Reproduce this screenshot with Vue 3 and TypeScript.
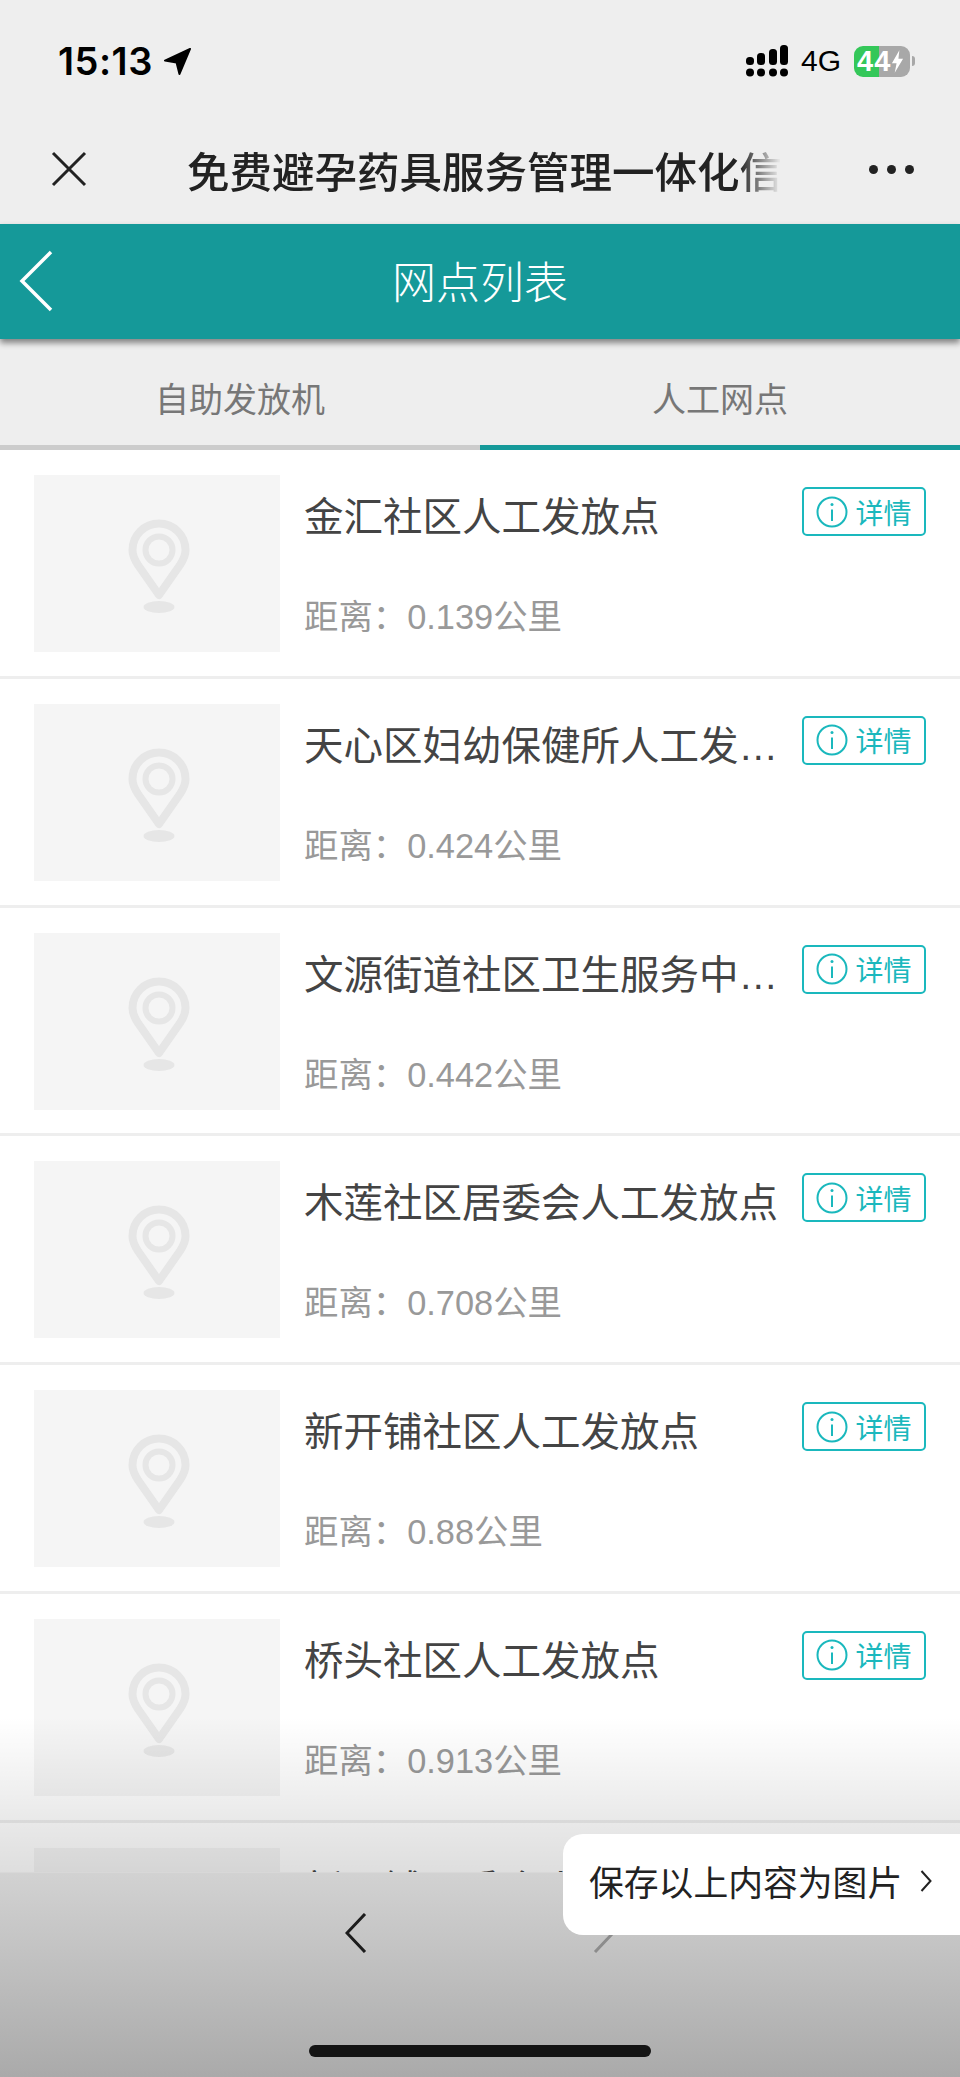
<script setup lang="ts">
interface Site {
  name: string
  distance: string
}

const sites: Site[] = [
  { name: '金汇社区人工发放点', distance: '0.139' },
  { name: '天心区妇幼保健所人工发放点', distance: '0.424' },
  { name: '文源街道社区卫生服务中心人工发放点', distance: '0.442' },
  { name: '木莲社区居委会人工发放点', distance: '0.708' },
  { name: '新开铺社区人工发放点', distance: '0.88' },
  { name: '桥头社区人工发放点', distance: '0.913' },
  { name: '新开铺居委会人工发放点', distance: '1.02' },
]
</script>

<template>
  <div class="page">
    <div class="status-bar">
      <div class="time">
        <span>15:13</span>
        <svg class="loc" viewBox="0 0 30 30" width="29" height="29">
          <path d="M28 2 L2 14 L14 16 L17 28 Z" fill="#000" stroke="#000" stroke-width="2" stroke-linejoin="round" />
        </svg>
      </div>
      <div class="status-right">
        <svg class="signal" viewBox="0 0 42 32" width="42" height="32">
          <g fill="#000">
            <rect x="0" y="12" width="8" height="8" rx="3.5" />
            <rect x="11" y="8" width="8" height="12" rx="3.5" />
            <rect x="23" y="4" width="8" height="16" rx="3.5" />
            <rect x="34" y="0" width="8" height="20" rx="3.5" />
            <circle cx="4" cy="27.5" r="4" />
            <circle cx="15" cy="27.5" r="4" />
            <circle cx="27" cy="27.5" r="4" />
            <circle cx="38" cy="27.5" r="4" />
          </g>
        </svg>
        <span class="net">4G</span>
        <div class="battery">
          <span>44</span>
          <svg viewBox="0 0 14 24" width="13" height="23">
            <path d="M9 0 L1 14 H6 L4 24 L13 9 H8 Z" fill="#fff" />
          </svg>
        </div>
        <span class="battery-cap"></span>
      </div>
    </div>

    <div class="wx-nav">
      <svg class="wx-close" viewBox="0 0 36 36" width="36" height="36">
        <path d="M2 2 L34 34 M34 2 L2 34" stroke="#222" stroke-width="3" fill="none" />
      </svg>
      <div class="wx-title">免费避孕药具服务管理一体化信息系统</div>
      <div class="wx-more"><i></i><i></i><i></i></div>
    </div>

    <header class="head">
      <svg class="head-back" viewBox="0 0 34 62" width="34" height="62">
        <path d="M32 2 L3 31 L32 60" stroke="#fff" stroke-width="3.5" fill="none" />
      </svg>
      <h1>网点列表</h1>
    </header>

    <div class="tabs">
      <div class="tab">自助发放机</div>
      <div class="tab active">人工网点</div>
    </div>

    <div class="list">
      <div v-for="site in sites" :key="site.name" class="row">
        <div class="thumb">
          <svg viewBox="0 0 246 177" width="246" height="177">
            <g fill="none" stroke="#e6e6e6">
              <path d="M125 120 L104 90 C100 84 98.500 80 98.500 75 A26.500 26.500 0 0 1 151.500 75 C151.500 80 150 84 146 90 Z" stroke-width="8" stroke-linejoin="round" />
              <circle cx="125" cy="75" r="13.500" stroke-width="6" />
            </g>
            <ellipse cx="125" cy="132" rx="15.500" ry="6" fill="#e6e6e6" />
          </svg>
        </div>
        <div class="info">
          <div class="name">{{ site.name }}</div>
          <div class="dist">距离：{{ site.distance }}公里</div>
        </div>
        <div class="detail">
          <svg viewBox="0 0 32 32" width="32" height="32">
            <circle cx="16" cy="16" r="14.500" fill="none" stroke="#1ab8bd" stroke-width="2" />
            <path d="M16 13.500 V25" stroke="#1ab8bd" stroke-width="2" />
            <circle cx="16" cy="8.500" r="1.500" fill="#1ab8bd" />
          </svg>
          <span>详情</span>
        </div>
      </div>
      <div class="fade"></div>
    </div>

    <div class="toolbar">
      <svg class="tool-back" viewBox="0 0 22 40" width="22" height="40">
        <path d="M20 1 L2 20 L20 39" stroke="#1c1c1c" stroke-width="3" fill="none" />
      </svg>
      <svg class="tool-next" viewBox="0 0 22 40" width="22" height="40">
        <path d="M2 1 L20 20 L2 39" stroke="#8c8c8c" stroke-width="3" fill="none" />
      </svg>
      <div class="home-bar"></div>
      <div class="save-tip">
        <span>保存以上内容为图片</span>
        <svg viewBox="0 0 12 22" width="12" height="22">
          <path d="M1.500 1 L10.500 11 L1.500 21" stroke="#222" stroke-width="2" fill="none" />
        </svg>
      </div>
    </div>
  </div>
</template>

<style>
html,
body {
  margin: 0;
  background: #fff;
}
</style>

<style scoped>
.page {
  position: relative;
  display: flex;
  flex-direction: column;
  width: 960px;
  height: 2077px;
  overflow: hidden;
  font-family: "Liberation Sans", "Noto Sans CJK SC", sans-serif;
}

.status-bar {
  display: flex;
  align-items: center;
  justify-content: space-between;
  height: 122px;
  padding: 0 45px 0 58px;
  box-sizing: border-box;
  background: #eee;
}

.time {
  display: flex;
  align-items: center;
  gap: 10px;
  font-family: Inter, "Liberation Sans", sans-serif;
  font-size: 38px;
  font-weight: 600;
  letter-spacing: 0.5px;
  color: #000;
}

.status-right {
  display: flex;
  align-items: center;
}

.net {
  margin-left: 13px;
  font-size: 30px;
  color: #000;
}

.battery {
  display: flex;
  align-items: center;
  width: 56px;
  height: 31px;
  margin-left: 13px;
  padding-left: 3px;
  box-sizing: border-box;
  border-radius: 9px;
  background: linear-gradient(90deg, #34c759 25px, #a8a8a8 25px);
  color: #fff;
  font-size: 29px;
  font-weight: 700;
  letter-spacing: 1px;
}

.battery-cap {
  width: 3px;
  height: 10px;
  margin-left: 2px;
  border-radius: 0 3px 3px 0;
  background: #a8a8a8;
}

.wx-nav {
  display: flex;
  align-items: center;
  height: 102px;
  padding: 0 46px 8px 51px;
  box-sizing: border-box;
  background: #eee;
}

.wx-title {
  width: 594px;
  margin-left: 100px;
  overflow: hidden;
  white-space: nowrap;
  font-size: 42.500px;
  font-weight: 500;
  color: #222;
  -webkit-mask-image: linear-gradient(90deg, #000 93%, transparent 100%);
  mask-image: linear-gradient(90deg, #000 93%, transparent 100%);
}

.wx-more {
  display: flex;
  gap: 9px;
  margin-left: auto;
}

.wx-more i {
  width: 9px;
  height: 9px;
  border-radius: 50%;
  background: #222;
}

.head {
  position: relative;
  z-index: 2;
  display: flex;
  align-items: center;
  justify-content: center;
  height: 115px;
  padding-bottom: 3px;
  box-sizing: border-box;
  background: #159999;
  box-shadow: 0 4px 6px rgba(0, 0, 0, 0.45);
}

.head-back {
  position: absolute;
  left: 19px;
  top: 26px;
}

.head h1 {
  margin: 0;
  font-size: 44px;
  font-weight: 300;
  color: #fff;
}

.tabs {
  display: flex;
  height: 111px;
  background: #eee;
}

.tab {
  flex: 1;
  display: flex;
  align-items: center;
  justify-content: center;
  padding-top: 10px;
  box-sizing: border-box;
  border-bottom: 5px solid #ccc;
  font-size: 34px;
  color: #777;
}

.tab.active {
  border-bottom-color: #159999;
}

.list {
  position: relative;
  flex: 1;
  overflow: hidden;
  background: #fff;
}

.row {
  display: flex;
  height: 228.800px;
  padding: 25px 34px 0;
  box-sizing: border-box;
  border-bottom: 3px solid #eee;
}

.thumb {
  flex: none;
  width: 246px;
  height: 177px;
  background: #f5f5f5;
}

.thumb svg {
  display: block;
}

.info {
  flex: none;
  width: 476px;
  margin-left: 24px;
}

.name {
  margin-top: 15px;
  overflow: hidden;
  white-space: nowrap;
  text-overflow: ellipsis;
  font-size: 39.500px;
  line-height: 54px;
  color: #444;
}

.dist {
  margin-top: 50px;
  font-size: 34.400px;
  line-height: 46px;
  color: #999;
}

.detail {
  flex: none;
  display: flex;
  align-items: center;
  justify-content: center;
  gap: 7px;
  width: 124px;
  height: 49px;
  margin: 12px 0 0 22px;
  box-sizing: border-box;
  border: 2px solid #1ab8bd;
  border-radius: 5px;
  font-size: 28px;
  color: #1ab8bd;
}

.fade {
  position: absolute;
  left: 0;
  right: 0;
  bottom: 0;
  height: 155px;
  background: linear-gradient(180deg, rgba(0, 0, 0, 0), rgba(0, 0, 0, 0.13));
}

.toolbar {
  position: relative;
  height: 205px;
  border-top: 1px solid #d8d8d8;
  box-sizing: border-box;
  background: linear-gradient(180deg, #d2d2d2, #aaa);
}

.tool-back {
  position: absolute;
  left: 345px;
  top: 40px;
}

.tool-next {
  position: absolute;
  left: 593px;
  top: 40px;
}

.home-bar {
  position: absolute;
  left: 309px;
  top: 172px;
  width: 342px;
  height: 12px;
  border-radius: 6px;
  background: #141414;
}

.save-tip {
  position: absolute;
  left: 563px;
  top: -39px;
  right: 0;
  display: flex;
  align-items: center;
  gap: 18px;
  height: 101px;
  padding: 0 0 7px 26px;
  box-sizing: border-box;
  border-radius: 20px 0 0 20px;
  background: #fff;
  font-size: 34.800px;
  color: #222;
}
</style>
